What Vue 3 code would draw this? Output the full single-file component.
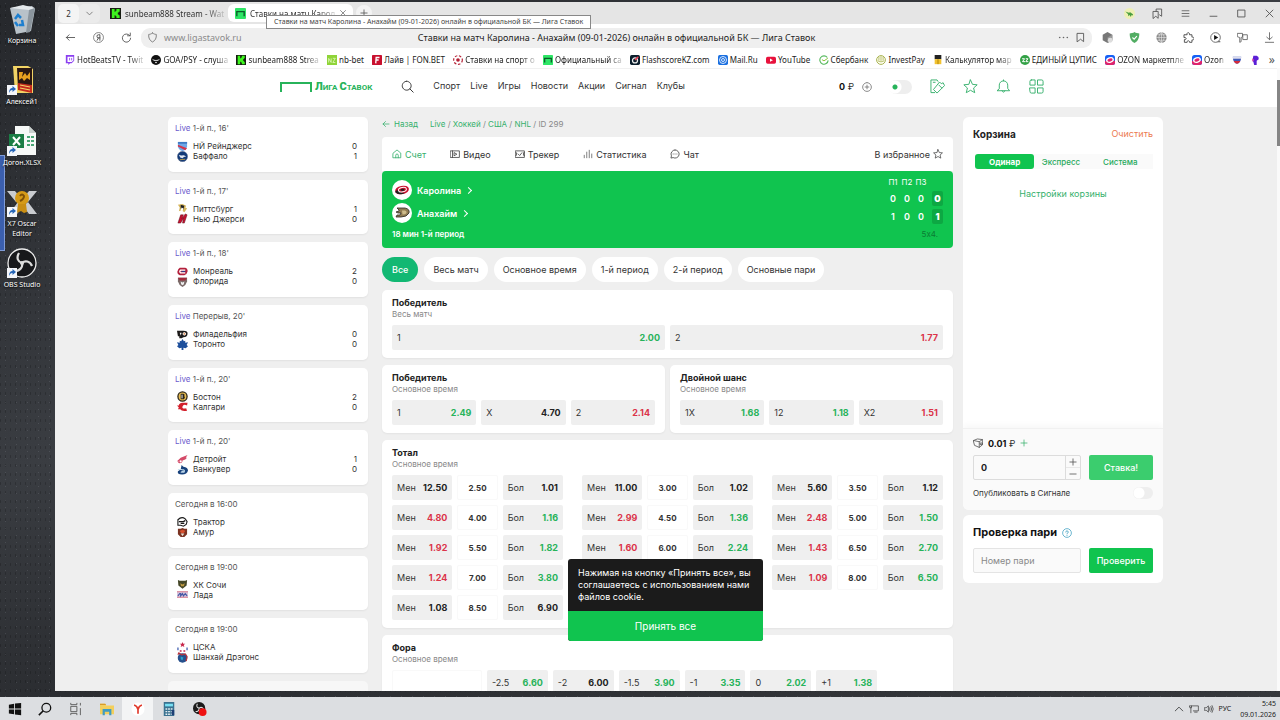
<template>
  <div class="desktop">
    <div class="workspace">
      <aside class="shortcuts">
        <div class="selection"></div>
        <a v-for="s in shortcuts" :key="s.name" href="#" class="shortcut">
          <svg viewBox="0 0 30 30" class="shortcut-icon" v-html="art[s.icon]"></svg>
          <span>{{ s.name }}</span>
        </a>
      </aside>

      <section class="browser">
        <div class="tab-bar">
          <button class="tab-count">2</button>
          <button class="tab-drop" aria-label="Группы вкладок"><svg viewBox="0 0 16 16" class="ic" v-html="art.down"></svg></button>
          <div class="tab">
            <svg viewBox="0 0 12 12" class="fav" v-html="art.kick"></svg>
            <span class="fade">sunbeam888 Stream - Wat</span>
          </div>
          <div class="tab active">
            <svg viewBox="0 0 12 12" class="fav" v-html="art.liga"></svg>
            <span class="fade">Ставки на матч Карол</span>
            <button class="tab-close" aria-label="Закрыть"><svg viewBox="0 0 16 16" v-html="art.close"></svg></button>
          </div>
          <button class="tab-add" aria-label="Новая вкладка"><svg viewBox="0 0 16 16" v-html="art.add"></svg></button>
          <div class="window-tools">
            <svg v-for="i in windowIcons" :key="i" viewBox="0 0 16 16" class="ic" v-html="art[i]"></svg>
          </div>
          <div class="tab-tip">Ставки на матч Каролина - Анахайм (09-01-2026) онлайн в официальной БК — Лига Ставок</div>
        </div>

        <div class="address-row">
          <svg v-for="i in ['back', 'ya', 'reload']" :key="i" viewBox="0 0 16 16" class="ic" v-html="art[i]"></svg>
          <div class="address">
            <div class="address-side">
              <svg viewBox="0 0 16 16" class="ic" v-html="art.shield"></svg>
              <span class="url">www.ligastavok.ru</span>
            </div>
            <span class="page-title">Ставки на матч Каролина - Анахайм (09-01-2026) онлайн в официальной БК — Лига Ставок</span>
            <div class="address-side end">
              <svg viewBox="0 0 16 16" class="ic" v-html="art.dots"></svg>
              <svg viewBox="0 0 16 16" class="ic" v-html="art.mark"></svg>
            </div>
          </div>
          <div class="extensions">
            <svg v-for="i in extensions" :key="i" viewBox="0 0 16 16" class="ic" v-html="art[i]"></svg>
          </div>
        </div>

        <nav class="bookmarks">
          <a v-for="(b, i) in bookmarks" :key="i" href="#">
            <svg viewBox="0 0 12 12" class="bm-icon" v-html="art[b.icon]"></svg>
            <span v-if="b.name" :class="{ fade: b.cut }">{{ b.name }}</span>
          </a>
          <a href="#" class="more">»</a>
        </nav>

        <div class="viewport">
          <div class="site">
            <header class="site-header">
              <div class="header-inner">
                <a href="#" class="logo">
                  <svg viewBox="0 0 32 11"><path d="M1 11V2h30v9" fill="none" stroke="#27b35a" stroke-width="2" /></svg>
                  <span><b>Л</b>ИГА <b>С</b>ТАВОК</span>
                </a>
                <svg viewBox="0 0 16 16" class="search" v-html="art.search"></svg>
                <nav class="site-nav">
                  <a v-for="n in nav" :key="n" href="#">{{ n }}</a>
                </nav>
                <div class="account">
                  <span class="balance"><b>0</b> ₽</span>
                  <svg viewBox="0 0 16 16" class="plus" v-html="art.plusCircle"></svg>
                  <input type="checkbox" class="head-toggle" aria-label="Скрыть баланс" />
                  <svg v-for="i in ['coupons', 'star', 'bell', 'grid']" :key="i" viewBox="0 0 16 16" class="head-icon" v-html="art[i]"></svg>
                </div>
              </div>
            </header>

            <div class="content">
              <aside class="matches">
                <article v-for="m in matches" :key="m.home" class="match">
                  <div class="match-time"><span v-if="m.live" class="live">Live</span> {{ m.time }}</div>
                  <div class="team">
                    <svg viewBox="0 0 12 12" v-html="art[m.icons[0]]"></svg>
                    <span>{{ m.home }}</span><span class="goals">{{ m.score[0] }}</span>
                  </div>
                  <div class="team">
                    <svg viewBox="0 0 12 12" v-html="art[m.icons[1]]"></svg>
                    <span>{{ m.away }}</span><span class="goals">{{ m.score[1] }}</span>
                  </div>
                </article>
                <div class="match-next"></div>
              </aside>

              <main class="event">
                <div class="crumbs">
                  <a href="#" class="crumb-back"><svg viewBox="0 0 16 16" v-html="art.backGreen"></svg>Назад</a>
                  <span><template v-for="c in ['Live', 'Хоккей', 'США', 'NHL']" :key="c"><a href="#">{{ c }}</a> / </template>ID 299</span>
                </div>

                <div class="event-tabs">
                  <a v-for="(t, i) in tabs" :key="t.name" href="#" :class="{ current: i === 0 }">
                    <svg viewBox="0 0 16 16" v-html="art[t.icon]"></svg>{{ t.name }}
                  </a>
                  <button class="favorite">В избранное <svg viewBox="0 0 16 16" v-html="art.starDark"></svg></button>
                </div>

                <div class="scoreboard">
                  <div class="rivals">
                    <a href="#" class="rival"><svg viewBox="0 0 20 20" v-html="art.carolina"></svg>Каролина<i></i></a>
                    <a href="#" class="rival"><svg viewBox="0 0 20 20" v-html="art.anaheim"></svg>Анахайм<i></i></a>
                    <div class="status">18 мин 1-й период</div>
                  </div>
                  <div class="score">
                    <table>
                      <thead><tr><th>П1</th><th>П2</th><th>П3</th><th></th></tr></thead>
                      <tbody>
                        <tr><td>0</td><td>0</td><td>0</td><td class="sum"><b>0</b></td></tr>
                        <tr><td>1</td><td>0</td><td>0</td><td class="sum"><b>1</b></td></tr>
                      </tbody>
                    </table>
                    <div class="power">5x4.</div>
                  </div>
                </div>

                <div class="filters">
                  <button v-for="(f, i) in filters" :key="f" :class="{ on: i === 0 }">{{ f }}</button>
                </div>

                <div class="markets">
                  <div v-for="(row, r) in simpleMarkets" :key="r" class="market-row">
                    <section v-for="(m, k) in row" :key="k" class="market">
                      <h3>{{ m.title }}</h3>
                      <p>{{ m.period }}</p>
                      <div class="odds">
                        <button v-for="o in m.odds" :key="o[0]" class="odd">{{ o[0] }}<b :class="o[2]">{{ o[1] }}</b></button>
                      </div>
                    </section>
                  </div>

                  <section class="market">
                    <h3>Тотал</h3>
                    <p>Основное время</p>
                    <div class="totals">
                      <div v-for="(t, i) in totals" :key="i" class="total">
                        <template v-if="t">
                          <button class="odd">Мен<b :class="t[1]">{{ t[0] }}</b></button>
                          <span class="line">{{ t[2] }}</span>
                          <button class="odd">Бол<b :class="t[4]">{{ t[3] }}</b></button>
                        </template>
                      </div>
                    </div>
                  </section>

                  <section class="market">
                    <h3>Фора</h3>
                    <p>Основное время</p>
                    <div class="handicap">
                      <span class="line"></span>
                      <button v-for="h in handicaps" :key="h[0]" class="odd">{{ h[0] }}<b :class="h[2]">{{ h[1] }}</b></button>
                    </div>
                  </section>
                </div>
              </main>

              <aside class="side">
                <section class="cart">
                  <div class="cart-body">
                    <div class="cart-head"><h2>Корзина</h2><a href="#">Очистить</a></div>
                    <div class="cart-tabs">
                      <button class="on">Одинар</button><button>Экспресс</button><button>Система</button>
                    </div>
                    <a href="#" class="cart-settings">Настройки корзины</a>
                  </div>
                  <div class="cart-foot">
                    <div class="wallet"><svg viewBox="0 0 16 16" v-html="art.wallet"></svg><span><b>0.01</b> ₽</span><button aria-label="Пополнить"><svg viewBox="0 0 16 16" v-html="art.addGreen"></svg></button></div>
                    <div class="form-row">
                      <div class="stake">
                        <input v-model="stake" type="text" aria-label="Сумма" />
                        <div class="steps">
                          <button aria-label="Больше" @click="stake++"><svg viewBox="0 0 16 16" v-html="art.add"></svg></button>
                          <button aria-label="Меньше" @click="stake--"><svg viewBox="0 0 16 16" v-html="art.remove"></svg></button>
                        </div>
                      </div>
                      <button class="submit pale">Ставка!</button>
                    </div>
                    <div class="publish">
                      <label for="publish">Опубликовать в Сигнале</label>
                      <input id="publish" type="checkbox" />
                    </div>
                  </div>
                </section>

                <section class="check">
                  <label for="bet-id">Проверка пари <svg viewBox="0 0 16 16" v-html="art.help"></svg></label>
                  <div class="form-row">
                    <input id="bet-id" type="text" placeholder="Номер пари" />
                    <button class="submit">Проверить</button>
                  </div>
                </section>
              </aside>
            </div>
          </div>
          <div class="scrollbar"><div class="thumb"></div></div>

          <div class="cookie">
            <p>Нажимая на кнопку «Принять все», вы соглашаетесь с использованием нами файлов cookie.</p>
            <button>Принять все</button>
          </div>
        </div>
      </section>
    </div>

    <footer class="taskbar">
      <button v-for="i in taskIcons" :key="i" :class="{ on: i === 'yandex' }" :aria-label="i">
        <svg viewBox="0 0 16 16" v-html="art[i]"></svg>
      </button>
      <div class="tray">
        <svg v-for="i in ['up', 'network', 'sound']" :key="i" viewBox="0 0 16 16" v-html="art[i]"></svg>
        <span>РУС</span>
        <div class="clock">5:45<br />09.01.2026</div>
      </div>
    </footer>
  </div>
</template>

<script setup>
import { ref } from 'vue';

const stake = ref(0);

const shortcuts = [
  { name: 'Корзина', icon: 'bin' },
  { name: 'Алексей1', icon: 'folderPic' },
  { name: 'Догон.XLSX', icon: 'excel' },
  { name: 'X7 Oscar Editor', icon: 'x7' },
  { name: 'OBS Studio', icon: 'obs' },
];
const windowIcons = ['dino', 'collections', 'menu', 'minimize', 'maximize', 'close'];
const extensions = ['cube', 'guard', 'globe', 'puzzle', 'player', 'pass', 'download'];
const taskIcons = ['windows', 'searchBold', 'taskview', 'explorer', 'yandex', 'calc', 'obsRec'];

const bookmarks = [
  { name: 'HotBeatsTV - Twit', icon: 'twitch', cut: true },
  { name: 'GOA/PSY - слуша', icon: 'goa', cut: true },
  { name: 'sunbeam888 Strea', icon: 'kick', cut: true },
  { name: 'nb-bet', icon: 'nb' },
  { name: 'Лайв | FON.BET', icon: 'fon' },
  { name: 'Ставки на спорт о', icon: 'ball', cut: true },
  { name: 'Официальный са', icon: 'liga', cut: true },
  { name: 'FlashscoreKZ.com', icon: 'flash' },
  { name: 'Mail.Ru', icon: 'mail' },
  { name: 'YouTube', icon: 'youtube' },
  { name: 'Сбербанк', icon: 'sber' },
  { name: 'InvestPay', icon: 'invest' },
  { name: 'Калькулятор мар', icon: 'calcBm', cut: true },
  { name: 'ЕДИНЫЙ ЦУПИС', icon: 'cupis' },
  { name: 'OZON маркетпле', icon: 'ozon', cut: true },
  { name: 'Ozon', icon: 'ozon', cut: true },
  { icon: 'flag' },
  { icon: 'purple' },
];

const nav = ['Спорт', 'Live', 'Игры', 'Новости', 'Акции', 'Сигнал', 'Клубы'];

const matches = [
  { live: true, time: "1-й п., 16'", home: 'НЙ Рейнджерс', away: 'Баффало', score: [0, 1], icons: ['rangers', 'buffalo'] },
  { live: true, time: "1-й п., 17'", home: 'Питтсбург', away: 'Нью Джерси', score: [1, 0], icons: ['pens', 'devils'] },
  { live: true, time: "1-й п., 18'", home: 'Монреаль', away: 'Флорида', score: [2, 0], icons: ['habs', 'florida'] },
  { live: true, time: "Перерыв, 20'", home: 'Филадельфия', away: 'Торонто', score: [0, 0], icons: ['flyers', 'leafs'] },
  { live: true, time: "1-й п., 20'", home: 'Бостон', away: 'Калгари', score: [2, 0], icons: ['boston', 'calgary'] },
  { live: true, time: "1-й п., 20'", home: 'Детройт', away: 'Ванкувер', score: [1, 0], icons: ['detroit', 'canucks'] },
  { time: 'Сегодня в 16:00', home: 'Трактор', away: 'Амур', score: [], icons: ['traktor', 'amur'] },
  { time: 'Сегодня в 19:00', home: 'ХК Сочи', away: 'Лада', score: [], icons: ['sochi', 'lada'] },
  { time: 'Сегодня в 19:00', home: 'ЦСКА', away: 'Шанхай Дрэгонс', score: [], icons: ['cska', 'shanghai'] },
];

const tabs = [
  { name: 'Счет', icon: 'home' },
  { name: 'Видео', icon: 'video' },
  { name: 'Трекер', icon: 'tracker' },
  { name: 'Статистика', icon: 'stats' },
  { name: 'Чат', icon: 'chat' },
];
const filters = ['Все', 'Весь матч', 'Основное время', '1-й период', '2-й период', 'Основные пари'];

const simpleMarkets = [
  [{ title: 'Победитель', period: 'Весь матч', odds: [['1', '2.00', 'up'], ['2', '1.77', 'down']] }],
  [
    { title: 'Победитель', period: 'Основное время', odds: [['1', '2.49', 'up'], ['X', '4.70'], ['2', '2.14', 'down']] },
    { title: 'Двойной шанс', period: 'Основное время', odds: [['1X', '1.68', 'up'], ['12', '1.18', 'up'], ['X2', '1.51', 'down']] },
  ],
];

const totals = [
  ['12.50', '', '2.50', '1.01', ''], ['11.00', '', '3.00', '1.02', ''], ['5.60', '', '3.50', '1.12', ''],
  ['4.80', 'down', '4.00', '1.16', 'up'], ['2.99', 'down', '4.50', '1.36', 'up'], ['2.48', 'down', '5.00', '1.50', 'up'],
  ['1.92', 'down', '5.50', '1.82', 'up'], ['1.60', 'down', '6.00', '2.24', 'up'], ['1.43', 'down', '6.50', '2.70', 'up'],
  ['1.24', 'down', '7.00', '3.80', 'up'], null, ['1.09', 'down', '8.00', '6.50', 'up'],
  ['1.08', '', '8.50', '6.90', ''], null, null,
];
const handicaps = [
  ['-2.5', '6.60', 'up'], ['-2', '6.00'], ['-1.5', '3.90', 'up'], ['-1', '3.35', 'up'], ['0', '2.02', 'up'], ['+1', '1.38', 'up'],
];

const line = (d, color = '#555', w = 1.3) =>
  `<path d="${d}" fill="none" stroke="${color}" stroke-width="${w}" stroke-linecap="round" stroke-linejoin="round"/>`;
const arrow = '<rect x="0" y="20" width="10" height="10" fill="#f4f6fa"/><path d="M2 28c0-3 1-5 3.500-5V21l3.500 3-3.500 3v-2c-2 0-2.500 1-3.500 3z" fill="#2767b8"/>';
const starPath = 'M8 1l2.100 4.700 5 .5-3.800 3.400 1.200 5L8 12l-4.500 2.600 1.200-5L.900 6.200l5-.5z';
const searchPath = 'M7 1.500a5.500 5.500 0 1 0 .01 0M11 11l4 4';
const ozon = '<rect width="12" height="12" rx="3" fill="#1660f5"/><path d="M0 7h12v2a3 3 0 0 1-3 3H3a3 3 0 0 1-3-3z" fill="#e0246b"/><ellipse cx="6" cy="6" rx="4" ry="2.600" fill="#e0246b" stroke="#fff" stroke-width="1.600" transform="rotate(-18 6 6)"/>';

const art = {
  // desktop
  bin: '<path d="M3 4l22-2 3 3-4 22-15 3z" fill="#b9c2c9"/><path d="M3 4l19 2 6-2-12-3z" fill="#e4e9ec"/><path d="M22 6l6-2-5 24-4 1z" fill="#8b959d"/><path d="M8 15l3-4 3 3M15 16l1 5h-4M11 22l-3-4" fill="none" stroke="#1d7fd0" stroke-width="2.500"/>',
  folderPic: '<path d="M6 1h15l5 3v24H8z" fill="#f2d465"/><path d="M10 3h15v24l-14-3z" fill="#2a1712"/><path d="M12 7h4l-1 5 3-4 2 3 3-4v8l-3-2-3 3-2-3-3 2z" fill="#e8a020"/><path d="M11 18l14 2v8l-14-3z" fill="#c52b1d"/><path d="M13 20l10 2M13 23l10 2" stroke="#f3d36b" stroke-width="1.200"/>' + arrow,
  excel: '<path d="M8 0h14l7 7v22H8z" fill="#f6f8f7"/><path d="M22 0l7 7h-7z" fill="#c9d0cd"/><path d="M20 11h7M20 15h7M20 19h7" stroke="#4aa676" stroke-width="2" stroke-dasharray="3 1"/><rect x="2" y="8" width="15" height="14" fill="#1b7d45"/><path d="M6 11l7 8M13 11l-7 8" stroke="#fff" stroke-width="2"/>' + arrow,
  x7: '<path d="M0 4h8l6 8-5 3zM30 4h-8l-6 8 5 3zM30 27h-8l-6-8 5-4zM2 27l9-12 4 5-5 7z" fill="#c9ccd0"/><circle cx="15" cy="11" r="7" fill="#d59a17"/><path d="M13 9q2-3 4 0 0 3-4 5" fill="none" stroke="#7d5006" stroke-width="2"/><path d="M11 17l-1 9 4-2 3 2 3-1-1-8z" fill="#c98e13"/>' + arrow,
  obs: '<circle cx="15" cy="15" r="14" fill="#17181b" stroke="#eee" stroke-width="1.300"/><path d="M15 15c-4-1-6-5-3-10M15 15c3-3 8-2 10 3M15 15c1 4-2 8-7 8" fill="none" stroke="#dcdcdc" stroke-width="2.200"/><circle cx="15" cy="15" r="2" fill="#dcdcdc"/>' + arrow,

  // browser
  down: line('M4 6l4 4 4-4', '#777'),
  add: line('M8 3v10M3 8h10'),
  remove: line('M3 8h10'),
  dino: '<circle cx="8" cy="8" r="8" fill="#eef0b4"/><path d="M2 5l5 2 2-1 4 3v2l-2-1-1 3-2-3-2 2V9z" fill="#4b9e3f"/>',
  collections: line('M2 5h7v10l-3.500-3L2 15zM6 5V1.500h8V12l-3-2'),
  menu: line('M3 4h10M3 8h10M3 12h10', '#666'),
  minimize: line('M3 12h10'),
  maximize: line('M3 3h10v10H3z'),
  close: line('M3 3l10 10M13 3L3 13'),
  back: line('M14 8H2M6 4L2 8l4 4', '#555'),
  ya: '<circle cx="8" cy="8" r="7.200" fill="none" stroke="#555"/>' + line('M10 12V4H8a2 2 0 0 0 0 4.500h2M8 8.500L6 12', '#444'),
  reload: line('M13 5.500A6 6 0 1 0 14 9M13.500 1.500v4h-4', '#555'),
  shield: line('M8 1.500c2 1.500 4 2 5.500 2C14 9 12 12.500 8 14.500 4 12.500 2 9 2.500 3.500 4 3.500 6 3 8 1.500z', '#777'),
  dots: '<circle cx="2.500" cy="8" r="1.200" fill="#666"/><circle cx="8" cy="8" r="1.200" fill="#666"/><circle cx="13.500" cy="8" r="1.200" fill="#666"/>',
  mark: line('M3.500 2h9v12L8 10.500 3.500 14z'),
  cube: '<path d="M8 0l7 4v8l-7 4-7-4V4z" fill="#777"/><path d="M8 8l7-4v8l-7 4z" fill="#999"/><circle cx="12" cy="12" r="3.500" fill="#ddd"/>',
  guard: '<path d="M8 0c2 1.500 5 2 7 2 0 7-2 11-7 14C3 13 1 9 1 2c2 0 5-.5 7-2z" fill="#52ad63"/><path d="M5 8l2.500 2.500L11.500 6" fill="none" stroke="#fff" stroke-width="1.600"/>',
  globe: '<circle cx="8" cy="8" r="7.500" fill="#8a8a8a"/><path d="M0 8h16M8 0v16M2 4h12M2 12h12M8 .5c-5 4-5 11 0 15M8 .5c5 4 5 11 0 15" fill="none" stroke="#eee" stroke-width=".8"/>',
  puzzle: line('M2 4h4c-1.500-4 4.500-4 3.500 0H13v3.500c4-1 4 5 0 4V15H9.500c.5-3-4-3-3.500 0H2v-4c3.500 1 3.500-4 0-3z', '#444'),
  player: '<circle cx="8" cy="8" r="7" fill="none" stroke="#555" stroke-width="1.200"/><path d="M6 4.500l6 3.500-6 3.500z" fill="#111"/><path d="M11 14h4" stroke="#777" stroke-width="2"/>',
  pass: line('M1 2h7v5l-2 1v6l-2 1V8L1 7zM9 4h6v7H9z', '#666'),
  download: line('M8 1v10M4 7.500L8 11l4-3.500M2 15h12', '#666'),

  // bookmarks
  twitch: '<path d="M1 0h10v7L8 10H6l-2 2v-2H1z" fill="#8b3ff0"/><path d="M3 2h7v4.500L8 8.500H3z" fill="#fff"/><path d="M5.500 3.500v3M8 3.500v3" stroke="#8b3ff0"/>',
  goa: '<circle cx="6" cy="6" r="6" fill="#111"/><path d="M1 4.500q5 3 10 0L8.500 7h-5z" fill="#fff"/><circle cx="6" cy="9" r="1" fill="#fff"/>',
  kick: '<rect width="12" height="12" fill="#161c12"/><path d="M2 1h3v3h1V3h1V1h3.500v3h-1v1h-1v2h1v1h1v3H7V9H6V8H5v3H2z" fill="#3df51e"/>',
  nb: '<rect width="12" height="12" fill="#8fd438"/><path d="M2 9V4l3 5V4M7 4h3L7 9h3" fill="none" stroke="#dff5b8"/>',
  fon: '<rect width="12" height="12" rx="1" fill="#c8102e"/><path d="M4.500 10l.5-7h4M4.500 6H8" fill="none" stroke="#fff" stroke-width="1.600"/>',
  ball: '<circle cx="6" cy="6" r="5.200" fill="#fff" stroke="#b42035" stroke-width="1.400" stroke-dasharray="3 2"/><circle cx="6" cy="6" r="2.200" fill="#b42035"/>',
  liga: '<rect width="12" height="12" rx="1" fill="#2ee666"/><path d="M2 9V4h8v5" fill="none" stroke="#0c5a2a" stroke-width="1.500"/>',
  flash: '<rect width="12" height="12" rx="2" fill="#0b1e2c"/><circle cx="6" cy="6.500" r="3" fill="none" stroke="#eee" stroke-width="1.500"/><path d="M6 6l4-4" stroke="#f0384f" stroke-width="1.600"/>',
  mail: '<rect width="12" height="12" rx="2" fill="#1a6fe0"/><circle cx="6" cy="6" r="4.200" fill="none" stroke="#fff"/><circle cx="6" cy="6" r="1.800" fill="none" stroke="#fff"/>',
  youtube: '<rect y="2" width="12" height="8.500" rx="2" fill="#e8123c"/><path d="M4.800 4.200l3.500 2-3.500 2z" fill="#fff"/>',
  sber: '<path d="M10 3A5 5 0 1 0 11 6.500" fill="none" stroke="#54b85c" stroke-width="1.300"/><path d="M3.500 5.500L6 7l4.500-3" fill="none" stroke="#8ec740" stroke-width="1.200"/>',
  invest: '<circle cx="6" cy="6" r="5.300" fill="#fffef0" stroke="#a9b455" stroke-width="1.200"/><path d="M3.500 2v4.500M6 1.500V7M8.500 2v4.500M2 7q4 2.500 8 0" fill="none" stroke="#a9b455"/>',
  calcBm: '<rect x="2" width="8" height="5" fill="#222"/><rect x="2" y="5" width="8" height="6" fill="#f2c230"/><path d="M6 5v6" stroke="#a67d00"/>',
  cupis: '<circle cx="6" cy="6" r="6" fill="#33a146"/><path d="M2.500 4.500h3L3 8h3M7 4.500h2.500L7 8h3" fill="none" stroke="#fff" stroke-width="1.200"/>',
  ozon,
  flag: '<path d="M1 2h10q0 4-1.500 6Q8 10.500 6 10.500T2.500 8Q1 6 1 2z" fill="#3d58b8"/><path d="M1 2h10v2.500H1z" fill="#dde"/><path d="M2 7.300h8q-1.500 3.200-4 3.200T2 7.300z" fill="#d52b3a"/>',
  purple: '<path d="M4 1h4q3 1 2.500 4L8 7v5H5L4 8 3 7z" fill="#5b1fd6"/><path d="M2.500 4L5 6 3 8z" fill="#e34aa6"/>',

  // site header and tabs
  search: line(searchPath, '#333', 1.200),
  plusCircle: line('M8 1a7 7 0 1 0 .01 0M8 5v6M5 8h6', '#666', 1.200),
  coupons: line('M5 14.500H1V1h6.500l1 1.500M3.500 3.500h2M10.500 3.500l1.500 1.500 2-1 1.500 3-8 8-3.500-3.500zM9.500 6.500l3 3', '#35b06c', 1),
  star: line(starPath, '#35b06c', 1),
  starDark: line(starPath, '#444', 1.200),
  bell: line('M1.500 12.500h13L12.500 10V6.500a4.500 4.500 0 0 0-9 0V10zM6.500 12.500q1.500 3.500 3 0M8 1v1', '#35b06c', 1),
  grid: line('M2.500 1h4v5.500H1v-4Q1 1 2.500 1zM9.500 1h4Q15 1 15 2.500v4H9.500zM1 9.500h5.500V15h-4Q1 15 1 13.500zM9.500 9.500H15v4Q15 15 13.500 15h-4z', '#35b06c', 1),
  backGreen: line('M14 8H2M7 3L2 8l5 5', '#35b06c', 1.500),
  addGreen: line('M8 2v12M2 8h12', '#35b06c', 1.500),
  home: line('M2 6.500L8 1.500l6 5V14H2zM6 14v-4a2 2 0 0 1 4 0v4', '#35b06c'),
  video: line('M1 3h14v10.500H1zM4 3v10.500M7 6l4 2.300L7 10.500z', '#444'),
  tracker: line('M1 3h14v10.500H1zM1 6h1.500v4H1M15 6h-1.500v4H15M5 8l2.500 2.500L11 6', '#444'),
  stats: line('M2 14v-4M6 14V5M10 14V2M14 14V8', '#777', 1.500),
  chat: line('M8 1.500a6.500 6.500 0 1 1-3 12.200L1.500 14.500l.8-3.500A6.500 6.500 0 0 1 8 1.500M5 8h.1M8 8h.1M11 8h.1', '#444'),
  wallet: line('M1 4l6-2.500 8 1v8.500l-5 4-7-3zM1 4l9 2 5-3.500M10 6v9M12 8h3v2.500h-3z', '#555'),
  help: '<circle cx="8" cy="8" r="7" fill="none" stroke="#3d9fc0" stroke-width="1.200"/>' + line('M6 6.500a2 2 0 1 1 2.500 2Q8 8.700 8 9.500M8 12v.1', '#3d9fc0'),

  // team badges
  carolina: '<circle cx="10" cy="10" r="10" fill="#fff"/><ellipse cx="10" cy="10" rx="7" ry="4.200" fill="#c8102e" transform="rotate(-12 10 10)"/><path d="M3 12q4 4 10 1-5 0-8-3z" fill="#222"/><ellipse cx="10.500" cy="9.800" rx="4" ry="2.200" fill="none" stroke="#fff" transform="rotate(-12 10 10)"/><ellipse cx="10.500" cy="9.800" rx="2" ry="1.100" fill="#222"/>',
  anaheim: '<circle cx="10" cy="10" r="10" fill="#fff"/><path d="M5 5h8q5 1 4 5-2 4-8 4H4l1-2h3l1-2H6l-2-1 3-1V7z" fill="#8f7b52" stroke="#2b2925" stroke-width=".8"/><path d="M10 7.500h3q2 .5 1.500 2.500-1 1.500-4 1.500z" fill="#cdbb8a"/>',
  rangers: '<path d="M1 1h10v5q-1 4-5 5Q2 10 1 6z" fill="#6ea8e8"/><path d="M1 4l10 4-2 2L1 6z" fill="#d2344a"/><path d="M1 1h10v2H1z" fill="#3e7ac4"/>',
  buffalo: '<circle cx="6" cy="6" r="5.600" fill="#123a78" stroke="#6f7f9a" stroke-width=".6"/><path d="M2 4l2.500 1 3-.5L10 6l-2.500.5L6 8 3.500 7z" fill="#dfe6f0"/><path d="M3 9.500l6-.5" stroke="#e5b53b" stroke-width=".8"/>',
  pens: '<path d="M1 2l5-1 4 2-1 2 2 1-3 4-3-2-3 1 1-4z" fill="#d6b65c"/><path d="M4 2l4 1-1 4-3-1z" fill="#222"/><path d="M5 5l2 1-1 3-2-1z" fill="#fff"/>',
  devils: '<path d="M1 11L4 2h3L5.500 6 9 1l2 1-3 9H6L7 6l-3 5z" fill="#c31230" stroke="#5a0a18" stroke-width=".5"/>',
  habs: '<path d="M3 2h6q3 1 2.500 4T8 10H3Q0 9 .5 6T3 2z" fill="#b3203c"/><path d="M9 4.500H4q-2 1.500 0 3h5" fill="none" stroke="#fff" stroke-width="1.400"/><path d="M5 6h4" stroke="#24408e"/>',
  florida: '<path d="M1 2h10v4q-1 4-5 6-4-2-5-6z" fill="#7a6a68"/><path d="M1 2h10L9 5H3z" fill="#a32a3b"/><path d="M4 6l2 1 2-1-.5 3-1.500 1-1.500-1z" fill="#eee"/>',
  flyers: '<path d="M0 2h7q5 0 4.500 3.500T7 9L5 10H2.500V8H1z" fill="#1c1a19"/><path d="M3 4h2L4 7z" fill="#fff"/><circle cx="8" cy="5.300" r="1.400" fill="#e98a4a" stroke="#fff"/>',
  leafs: '<path d="M6 0l1.500 2.500L9 2v2l3-.5-1.500 3L12 8 9.500 10 7 9.500V12H5V9.500L2.500 10 0 8l1.500-1.500L0 3.500 3 4V2l1.500.5z" fill="#1d4f9c"/>',
  boston: '<circle cx="6" cy="6" r="5" fill="#e8bd53" stroke="#2a2416" stroke-width="1.400"/><path d="M4 3h3q2 .5 1 2.500 1.500 2-.5 3.500H4z" fill="#2a2416"/><path d="M5.500 4v4" stroke="#fff"/>',
  calgary: '<path d="M11.500 2H6Q2 2.500 2 5L0 5l2 2-1 2 2.500 0Q5 11.500 11 10.500L10 8q-5 1-4-2t5-1z" fill="#d3202c"/>',
  detroit: '<path d="M0 8l4-4 7.500-3-2 3 1.500 0-2 2-3 1q0 3-3 3T2 8.500z" fill="#d44a68"/><circle cx="4" cy="8" r="1.200" fill="#fff"/>',
  canucks: '<path d="M5 1l2 2q5 1 5 4-1 4.500-6.500 4.500T1 8l3-2z" fill="#18427c"/><path d="M1 6h5q3 0 2 2H5q4-1 3 1H4" fill="none" stroke="#c7dff0"/>',
  traktor: '<path d="M1 3q4-4 8-1l2 3-1 3-3 2-3-1-3 0z" fill="#fff" stroke="#1a1a1a" stroke-width="1.200"/><path d="M2 5h5l2-1M4 7l4 0" stroke="#1a1a1a" stroke-width="1.400"/>',
  amur: '<path d="M1 2l3 0 2-1 2 1h3l0 6-3 3H4L1 8z" fill="#7a3322"/><path d="M3 4l3-1 3 1-1 2-2 1-2-1z" fill="#d8502e"/><path d="M4 7h4L6 10z" fill="#e8e0d5"/>',
  sochi: '<path d="M1 1l2 1h6l2-1-.5 6L6 10.500 1.500 7z" fill="#454728"/><path d="M3.500 4.500L6 6l2.500-1.500L7.500 8h-3z" fill="#bf9840"/>',
  lada: '<path d="M0 3h12v6H0z" fill="#d9c6dd"/><path d="M0 3h12M0 9h12" stroke="#d06a80"/><path d="M1 7.500L3 5h1v2.500L6 5l1 2.500L9 5l2 2.500" fill="none" stroke="#4457a4" stroke-width="1.300"/>',
  cska: '<path d="M6 0l.8 2H9L7.300 3.400 8 5.500 6 4.300 4 5.500l.7-2.100L3 2h2.200z" fill="#c8274a"/><path d="M0 6h2v3H0zM10 6h2v3h-2z" fill="#7a8fc8"/><path d="M3 9h2v1.500H3zM7 9h2v1.500H7z" fill="#c8274a"/>',
  shanghai: '<circle cx="6" cy="6.500" r="5.200" fill="#27508c"/><path d="M1 3l1-2 3 2 4-1 2 3-1 5" fill="none" stroke="#b8323a" stroke-width="1.300"/><path d="M4 5l3 1-1 3-2-1z" fill="#2aa0c8"/>',

  // taskbar
  windows: '<path d="M1 3l6-1v5.500H1zM8 1.800L15 1v6.500H8zM1 8.500h6V14l-6-1zM8 8.500h7V15l-7-.8z" fill="#111"/>',
  searchBold: '<circle cx="9.500" cy="6.500" r="5" fill="none" stroke="#111" stroke-width="1.500"/><path d="M6 10l-5 5" stroke="#111" stroke-width="1.800"/>',
  taskview: '<path d="M2 5h7v6H2zM2 1v2h7V1M2 15v-2h7v2M13 1v3M13 7v8" fill="none" stroke="#555"/>',
  explorer: '<path d="M0 2h6l1 2h9v10H0z" fill="#f3cf5c"/><path d="M0 2h6l1 1.500H0z" fill="#d89b28"/><path d="M3 15V8h10v7h-2.500v-4h-5v4z" fill="#3f9bc2"/>',
  yandex: '<circle cx="8" cy="8" r="7.500" fill="#fff"/><path d="M3.500 3.500Q7 4.500 8 8.500v5M12.500 3.500Q9 4.500 8 8.500" fill="none" stroke="#e03a2c" stroke-width="1.900"/>',
  calc: '<path d="M2 0h12v16H2z" fill="#3a7290"/><path d="M3.500 2h9v3h-9z" fill="#77e0f4"/><path d="M4 8h8M4 11h8M4 14h8" stroke="#e6eef2" stroke-width="1.700" stroke-dasharray="2 1"/><path d="M11 9h3v6h-3z" fill="#1d3e74"/>',
  obsRec: '<circle cx="7" cy="7" r="7" fill="#1a1a1a"/><path d="M7 7Q3 6 5 2M7 7q3-2 5 1M7 7q0 4-4 4" fill="none" stroke="#ddd" stroke-width="1.200"/><circle cx="11" cy="11.500" r="4.500" fill="#ee1111"/>',
  up: line('M2 11l6-6 6 6', '#333'),
  network: line('M4 3h11v8H7M1 3h3v3H2zM3 6v8M9 13h4', '#333', 1.100),
  sound: line('M1 6h2.500L7 3v10l-3.500-3H1zM9 6q1.500 2 0 4M11 4q3 4 0 8M13 2.500q4 5.500 0 11', '#333', 1.100),
};
</script>

<style>
body { background: #2d2f33; overflow: hidden; }
</style>

<style scoped>
* { box-sizing: border-box; }
button, input { font: inherit; color: inherit; border: none; background: none; padding: 0; margin: 0; min-width: 0; }
button { cursor: pointer; }
a { color: inherit; text-decoration: none; }
svg { display: block; flex: none; }
h2, h3, p { margin: 0; }

.desktop {
  height: 100vh;
  display: flex;
  flex-direction: column;
  font-family: Inter, "Noto Sans", sans-serif;
  font-size: 9px;
  color: #333;
  background:
    radial-gradient(rgba(150,155,165,0.2) 0.5px, transparent 1px) 0 0 / 11px 7px,
    radial-gradient(rgba(0,0,0,0.2) 0.5px, transparent 1px) 3px 2px / 5px 9px,
    linear-gradient(160deg, #26282c, #3a3d42 40%, #2b2d31 60%, #36383c);
}
.workspace { flex: 1; min-height: 0; display: flex; padding: 2px 0 6px; }

/* Desktop shortcuts */
.shortcuts { position: relative; width: 55px; flex: none; padding: 2px 11px 0 0; display: flex; flex-direction: column; gap: 19px; font-family: "Noto Sans", sans-serif; }
.selection { position: absolute; left: 0; top: 153px; width: 5px; height: 96px; background: #3b5fae; border: 1px solid #7f9bd6; border-left: none; }
.shortcut { position: relative; display: flex; flex-direction: column; align-items: center; gap: 2px; padding: 0 6px; color: #fff; font-size: 7px; line-height: 10px; text-align: center; text-shadow: 0 1px 2px #000; }
.shortcut span { white-space: nowrap; }
.shortcut:nth-child(5) { margin-bottom: -10px; }
.shortcut:nth-child(5) span { white-space: normal; }
.shortcut-icon { width: 30px; height: 30px; }

/* Browser chrome */
.browser { flex: 1; min-width: 0; display: flex; flex-direction: column; background: #fff; }
.tab-bar, .address-row, .bookmarks { font-family: "Noto Sans", sans-serif; flex: none; display: flex; align-items: center; white-space: nowrap; }
.ic { width: 11px; height: 11px; }
.fav { width: 11px; height: 11px; }
.fade { mask-image: linear-gradient(to right, #000 80%, rgba(0,0,0,0.2)); }
.tab-bar { position: relative; height: 22px; background: #e5e5e5; padding: 0 5px 0 3px; font-size: 8px; }
.tab-count { width: 21px; height: 19px; background: #f4f4f4; border-radius: 5px; }
.tab-drop { width: 21px; height: 19px; display: grid; place-items: center; background: #ebebeb; border-radius: 5px; }
.tab { display: flex; align-items: center; gap: 4px; width: 120px; height: 18px; margin-left: 3px; padding: 0 7px; }
.tab.active { background: #fff; border-radius: 6px; width: 125px; margin-left: 5px; }
.tab-close { margin-left: auto; }
.tab-close svg { width: 8px; height: 8px; }
.tab-add { width: 16px; height: 16px; margin-left: 3px; border-radius: 50%; background: #f3f3f3; display: grid; place-items: center; }
.tab-add svg { width: 10px; height: 10px; }
.window-tools { margin-left: auto; display: flex; gap: 17px; }
.tab-tip { position: absolute; left: 211px; top: 13px; z-index: 2; height: 14px; padding: 0 7px; line-height: 12px; font-size: 7px; color: #444; background: #fff; border: 1px solid #888; }

.address-row { height: 27px; padding: 0 5px 0 10px; gap: 17px; }
.address { flex: 1; margin-left: -8px; height: 20px; padding: 0 6px; display: flex; align-items: center; background: #efefef; border-radius: 9px; font-size: 9px; }
.address-side { flex: 1; display: flex; align-items: center; gap: 6px; }
.address-side.end { justify-content: flex-end; }
.url { color: #8a8a8a; }
.page-title { color: #222; }
.extensions { display: flex; gap: 16px; margin-left: -7px; }

.bookmarks { height: 17px; padding: 0 5px 0 10px; justify-content: space-between; font-size: 8px; color: #222; }
.bookmarks a { display: flex; align-items: center; gap: 2px; }
.bm-icon { width: 10px; height: 10px; }
.bookmarks .more { font-size: 12px; line-height: 12px; color: #555; }

.viewport { position: relative; flex: 1; min-height: 0; display: flex; }
.site { flex: 1; min-width: 0; display: flex; flex-direction: column; background: #efefef; }
.scrollbar { width: 3px; flex: none; background: #fafafa; padding-top: 12px; }
.thumb { height: 66px; background: #858585; }

/* Site header */
.site-header { flex: none; height: 39px; background: #fff; border-top: 1px solid #f1f1f1; }
.header-inner { max-width: 772px; height: 100%; margin: 0 auto; padding: 0 8px 3px 0; display: flex; align-items: center; }
.logo { display: flex; align-items: center; gap: 3px; color: #27b35a; font: bold 8px Roboto, sans-serif; }
.logo svg { width: 32px; height: 11px; }
.logo span { white-space: nowrap; }
.logo b { font-size: 11px; }
.search { width: 13px; height: 13px; margin-left: 29px; }
.site-nav { display: flex; gap: 10px; margin-left: 19px; padding-bottom: 2px; }
.account { margin-left: auto; display: flex; align-items: center; }
.balance b { color: #111; }
.plus { width: 10px; height: 10px; margin: 0 17px 0 8px; }
.head-toggle { appearance: none; width: 23px; height: 14px; border-radius: 7px; background: radial-gradient(circle at 6px 7px, #27b35a 2px, #fff 3px 6px, #eeeeee 7px); }
.head-icon { width: 15px; height: 15px; margin-left: 18px; }

.content { flex: 1; min-height: 0; width: 100%; max-width: 996px; margin: 0 auto; padding: 10px 1px 0 0; display: flex; overflow: hidden; }

/* Match list */
.matches { width: 200px; flex: none; display: flex; flex-direction: column; gap: 8px; }
.match { flex: 1; min-height: 0; padding: 5px 11px 0 7px; background: #fff; border-radius: 5px; box-shadow: 0 1px 2px rgba(0,0,0,0.06); font-size: 8px; }
.match-time { line-height: 12px; color: #555; margin-bottom: 7px; }
.live { color: #6a5acd; }
.team { display: flex; align-items: center; height: 10px; line-height: 10px; gap: 5px; padding-left: 2px; }
.team svg { width: 11px; height: 11px; }
.goals { margin-left: auto; }
.match-next { height: 10px; flex: none; border-radius: 5px 5px 0 0; background: #f7f7f7; }

/* Event */
.event { flex: 1; min-width: 0; margin: 0 10px 0 14px; }
.crumbs { display: flex; gap: 12px; height: 13px; align-items: center; margin-bottom: 7px; font-size: 8px; color: #888; }
.crumbs a { color: #35b06c; }
.crumb-back { display: flex; align-items: center; gap: 4px; }
.crumb-back svg { width: 8px; height: 8px; }
.event-tabs { display: flex; align-items: center; gap: 24px; height: 34px; padding: 0 10px; background: #fff; border-radius: 4px 4px 0 0; }
.event-tabs a, .favorite { display: flex; align-items: center; gap: 3px; }
.event-tabs svg { width: 10px; height: 10px; }
.event-tabs .current { color: #35b06c; }
.favorite { margin-left: auto; }

.scoreboard { display: flex; justify-content: space-between; padding: 4px 10px; min-height: 77px; background: #10c44f; border-radius: 4px; color: #fff; }
.rivals { display: flex; flex-direction: column; align-items: flex-start; gap: 3px; padding-top: 5px; }
.rival { display: flex; align-items: center; gap: 5px; height: 20px; font-weight: 600; }
.rival svg { width: 20px; height: 20px; }
.rival i { width: 5px; height: 5px; border: solid #fff; border-width: 1px 1px 0 0; transform: rotate(45deg); }
.status { font-size: 8px; line-height: 16px; font-weight: 600; }
.score table { border-collapse: collapse; }
.score th { width: 14px; height: 14px; padding: 0; font-size: 8px; font-weight: 400; text-align: center; }
.score td { height: 18px; padding: 0; text-align: center; font-weight: 600; }
.score .sum { padding-left: 4px; }
.sum b { display: block; width: 11px; line-height: 15px; border-radius: 2px; background: #0da843; }
.power { margin-top: 3px; padding-right: 5px; text-align: right; font-size: 8px; line-height: 12px; color: #0a7d33; font-feature-settings: "calt" 0; }

.filters { display: flex; gap: 6px; margin: 9px 0 8px; }
.filters button { height: 25px; padding: 0 9px; border-radius: 13px; background: #fff; }
.filters .on { padding: 0 10px; background: #12b873; color: #fff; font-weight: 500; }

.markets { display: flex; flex-direction: column; gap: 7px; }
.market-row { display: flex; gap: 5px; }
.market { flex: 1; min-width: 0; padding: 7px 10px 8px; background: #fff; border-radius: 5px; box-shadow: 0 1px 2px rgba(0,0,0,0.05); }
.market h3 { font-size: 9px; line-height: 12px; font-weight: 700; color: #222; }
.market p { font-size: 8px; line-height: 11px; margin-bottom: 5px; color: #888; }
.odds { display: flex; gap: 5px; }
.odd { flex: 1; height: 25px; padding: 0 5px; display: flex; align-items: center; justify-content: space-between; background: #efefef; border-radius: 2px; }
.odd b { color: #222; font-weight: 700; }
.odd .up { color: #27b35a; }
.odd .down { color: #db3349; }
.totals { display: grid; grid-template-columns: repeat(3, 1fr); gap: 5px 19px; }
.total { display: grid; grid-template-columns: 3fr 2fr 3fr; gap: 5px; }
.line { display: grid; place-items: center; border: 1px solid #f9f9f9; border-radius: 2px; font-size: 8px; font-weight: 700; color: #333; }
.handicap { display: grid; grid-template-columns: 90px repeat(7, 1fr); gap: 5px; }

/* Right column */
.side { width: 200px; flex: none; }
.cart { background: #fff; border-radius: 6px; overflow: hidden; margin-bottom: 5px; }
.cart-body { height: 311px; padding: 10px; display: flex; flex-direction: column; }
.cart-head { display: flex; justify-content: space-between; align-items: center; line-height: 14px; }
.cart-head h2 { font-size: 10px; color: #222; }
.cart-head a { color: #ec7a50; }
.cart-tabs { display: grid; grid-template-columns: 10fr 9fr 11fr; margin: 13px 0 17px 2px; background: #fafafa; color: #27a95c; font-size: 8px; font-weight: 500; }
.cart-tabs button { height: 15px; border-radius: 3px; }
.cart-tabs .on { background: #10c44f; color: #fff; font-weight: 700; }
.cart-settings { text-align: center; line-height: 16px; color: #35b06c; }
.cart-foot { padding: 8px 10px 11px; background: #fafafa; border-top: 1px solid #f1f1f1; box-shadow: 0 -3px 6px rgba(0,0,0,0.03); }
.wallet { display: flex; align-items: center; gap: 5px; height: 12px; margin-bottom: 6px; }
.wallet svg { width: 10px; height: 10px; }
.wallet b { color: #111; }
.wallet button svg { width: 8px; height: 8px; }
.form-row { display: flex; gap: 8px; }
.stake { flex: 1; min-width: 0; height: 25px; display: flex; border: 1px solid #dcdcdc; border-radius: 2px; }
.stake input { flex: 1; padding: 0 7px; font-weight: 700; color: #222; outline: none; }
.steps { width: 15px; border-left: 1px solid #dcdcdc; display: flex; flex-direction: column; }
.steps button { flex: 1; display: grid; place-items: center; }
.steps svg { width: 10px; height: 10px; }
.steps button + button { border-top: 1px solid #e8e8e8; }
.submit { width: 64px; height: 25px; flex: none; border-radius: 2px; background: #10c44f; color: #fff; font-weight: 500; }
.submit.pale { background: #3bcd6e; }
.publish { display: flex; justify-content: space-between; align-items: center; margin-top: 7px; font-size: 8px; }
.publish input { appearance: none; width: 20px; height: 12px; border-radius: 6px; background: radial-gradient(circle at 6px 6px, #fff 5px, #eeeeee 6px); }
.check { padding: 10px; background: #fff; border-radius: 6px; }
.check label { display: flex; align-items: center; gap: 5px; margin-bottom: 8px; line-height: 15px; font-size: 11px; font-weight: 700; color: #111; }
.check label svg { width: 10px; height: 10px; }
.check input { flex: 1; height: 25px; padding: 0 7px; border: 1px solid #e4e4e4; border-radius: 2px; background: #fafafa; }
.check input::placeholder { color: #888; }

.cookie { position: absolute; left: 0; right: 4px; bottom: 50px; width: 195px; margin: 0 auto; overflow: hidden; border-radius: 3px; background: #1b1b1b; color: #fff; }
.cookie p { padding: 8px 10px; line-height: 12px; }
.cookie button { display: block; width: 100%; height: 30px; background: #10c44f; font-size: 10px; }

/* Taskbar */
.taskbar { flex: none; height: 23px; display: flex; align-items: center; background: #dcdee1; font-family: "Noto Sans", sans-serif; font-size: 7px; color: #222; }
.taskbar button { width: 31px; height: 100%; display: grid; place-items: center; }
.taskbar button:first-child { width: 29px; }
.taskbar button svg { width: 14px; height: 14px; }
.taskbar .on { background: #f3f4f5; }
.tray { margin-left: auto; padding-right: 4px; display: flex; align-items: center; gap: 5px; }
.tray svg { width: 10px; height: 10px; }
.clock { margin-left: 4px; text-align: right; line-height: 11px; }
</style>
